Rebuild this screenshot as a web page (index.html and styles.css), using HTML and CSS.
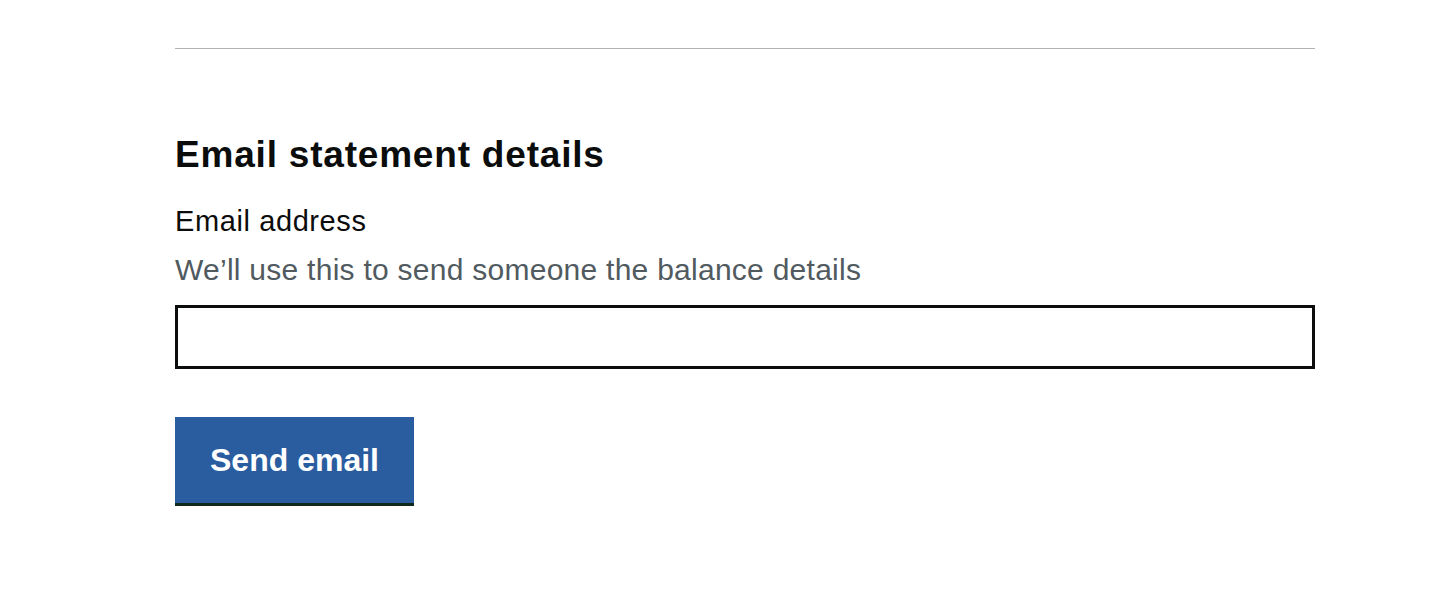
FILE: index.html
```html
<!DOCTYPE html>
<html lang="en">
<head>
<meta charset="utf-8">
<title>Email statement details</title>
<link rel="stylesheet" href="styles.css">
</head>
<body>
<main class="page">
  <hr class="divider">
  <form class="form">
    <h2 class="heading">Email statement details</h2>
    <label class="label" for="email">Email address</label>
    <div class="hint">We’ll use this to send someone the balance details</div>
    <input class="input" id="email" type="email">
    <button class="button" type="button">Send email</button>
  </form>
</main>
</body>
</html>
```

FILE: styles.css
```css
html, body {
  margin: 0;
  padding: 0;
  background: #ffffff;
}

body {
  font-family: "Liberation Sans", Arial, Helvetica, sans-serif;
  color: #0b0c0c;
}

.page {
  width: 1140px;
  margin-left: 175px;
  padding-top: 48px;
}

.divider {
  margin: 0;
  border: 0;
  height: 1px;
  background: #b1b4b6;
}

.form {
  display: flex;
  flex-direction: column;
  align-items: flex-start;
}

.heading {
  margin: 84px 0 0 0;
  font-size: 37px;
  line-height: 44px;
  font-weight: 700;
  letter-spacing: 0.8px;
}

.label {
  margin-top: 26px;
  font-size: 29px;
  line-height: 36px;
  letter-spacing: 0.6px;
}

.hint {
  margin-top: 13px;
  font-size: 30px;
  line-height: 36px;
  letter-spacing: 0.26px;
  color: #505a5f;
}

.input {
  box-sizing: border-box;
  margin-top: 17px;
  width: 100%;
  height: 64px;
  border: 3px solid #0b0c0c;
  border-radius: 0;
  padding: 0 8px;
  font: inherit;
  font-size: 30px;
  outline: none;
  background: #fff;
}

.button {
  box-sizing: border-box;
  margin-top: 48px;
  height: 89px;
  padding: 1px 35px 0;
  border: 0;
  border-bottom: 3px solid #0f2a1c;
  border-radius: 0;
  background: #2a5ca0;
  color: #ffffff;
  font-family: "Liberation Sans", Arial, Helvetica, sans-serif;
  font-weight: 700;
  font-size: 32px;
  line-height: 85px;
  cursor: pointer;
}
```
